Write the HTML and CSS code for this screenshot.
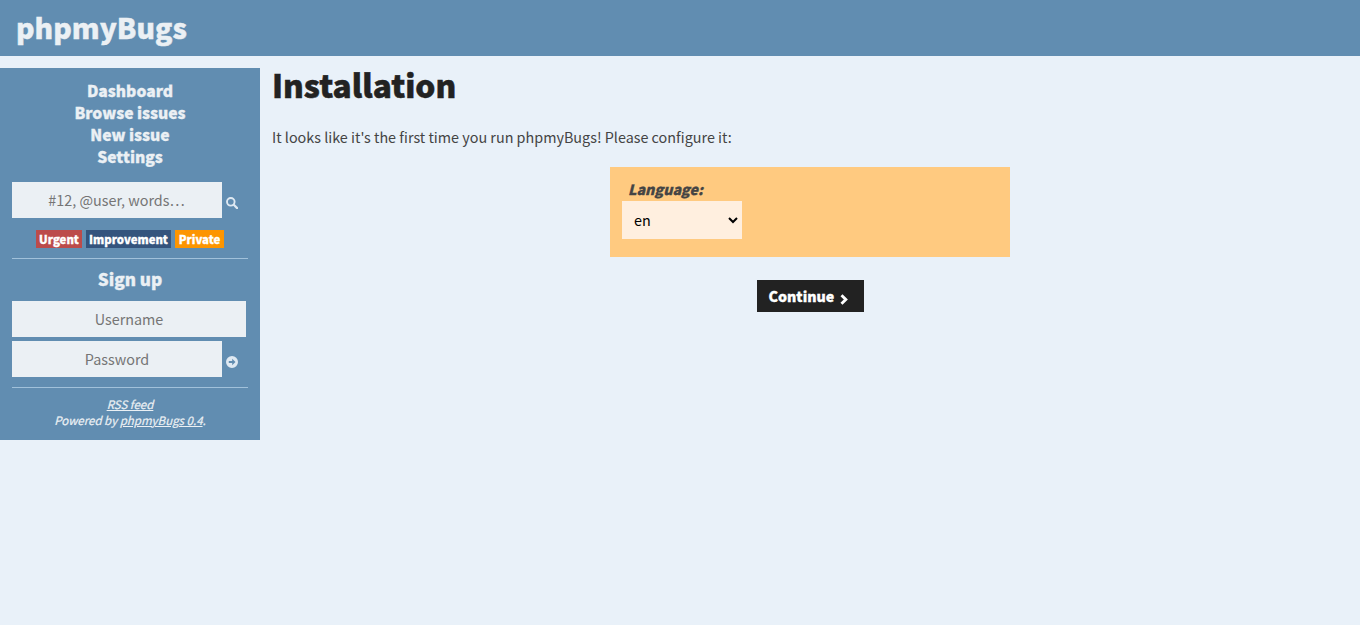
FILE: index.html
```html
<!DOCTYPE html>
<html lang="en">
<head>
<meta charset="utf-8">
<title>phpmyBugs</title>
<link rel="stylesheet" href="styles.css">
</head>
<body>
<header class="top"><span class="brand">phpmyBugs</span></header>
<div class="layout">
  <aside class="sidebar">
    <nav class="menu"><a>Dashboard</a><a>Browse issues</a><a>New issue</a><a>Settings</a></nav>
    <div class="row search">
      <input class="field" type="text" placeholder="#12, @user, words…">
      <svg class="icon" viewBox="0 0 12 12"><circle cx="4.8" cy="4.8" r="3.8" fill="none" stroke="currentColor" stroke-width="1.9"/><path d="M7.8 7.8L11.1 11.1" stroke="currentColor" stroke-width="2.2" stroke-linecap="round"/></svg>
    </div>
    <div class="labels"><a class="label urgent">Urgent</a><a class="label improvement">Improvement</a><a class="label private">Private</a></div>
    <hr class="rule">
    <a class="signup">Sign up</a>
    <input class="field wide" type="text" placeholder="Username">
    <div class="row">
      <input class="field password" type="password" placeholder="Password">
      <svg class="icon" viewBox="0 0 12 12"><path fill="currentColor" fill-rule="evenodd" d="M6 0a6 6 0 1 0 0 12A6 6 0 0 0 6 0zM6.2 2.8L9.5 6 6.2 9.2V7H2.8V5h3.4z"/></svg>
    </div>
    <hr class="rule">
    <footer class="foot"><a class="link">RSS feed</a><br>Powered by <a class="link">phpmyBugs 0.4</a>.</footer>
  </aside>
  <main class="content">
    <h1 class="title">Installation</h1>
    <p class="intro"><span>It looks like it's the first time you run phpmyBugs! Please configure it:</span></p>
    <form class="form">
      <div class="panel">
        <label class="caption">Language:</label>
        <select class="select"><option>en</option></select>
      </div>
      <button class="button" type="button"><span>Continue</span><svg class="chevron" viewBox="0 0 8 11"><path d="M1.5 1.3L5.8 5.5 1.5 9.7" fill="none" stroke="currentColor" stroke-width="2.9"/></svg></button>
    </form>
  </main>
</div>
</body>
</html>
```
FILE: styles.css
```css
* { box-sizing: border-box; }
body {
  margin: 0;
  background: #e9f1f9;
  color: #444;
  font: 14.37px/20px "Noto Sans CJK SC", "Noto Sans", sans-serif;
}
.top { height: 56px; padding: 0 16px; background: #618db1; color: #ebf0f4; }
.brand { font-size: 28.3px; font-weight: 900; line-height: 53px; -webkit-text-stroke: 0.4px currentColor; }
.layout { display: flex; align-items: flex-start; margin-top: 12px; }
.sidebar {
  width: 260px;
  height: 372px;
  padding: 12px;
  background: #618db1;
  color: #ebf0f4;
  text-align: center;
}
.menu { display: flex; flex-direction: column; font-size: 15.65px; font-weight: 900; -webkit-text-stroke: 0.3px currentColor; }
.menu a { height: 22px; line-height: 21px; }
.row { display: flex; gap: 4px; }
.search { margin-top: 14px; }
.field {
  display: block;
  width: 210px;
  height: 36px;
  padding: 0 13px 2px 12px;
  border: 0;
  border-radius: 0;
  background: #ebf0f4;
  font: inherit;
  text-align: center;
}
.field::placeholder { color: #757575; opacity: 1; }
.wide { width: 234px; margin-bottom: 4px; padding-right: 12px; }
.password { padding-right: 12px; }
.icon { width: 12px; height: 12px; margin-top: 15px; color: #dfe9f2; }
.labels { display: flex; justify-content: center; gap: 4px; margin-top: 12px; }
.label { height: 18px; color: #fff; font-size: 11.35px; font-weight: 900; line-height: 18px; -webkit-text-stroke: 0.3px currentColor; }
.urgent { width: 46px; background: #bc4b4b; }
.improvement { width: 85px; background: #34547d; }
.private { width: 49px; background: #fd9500; }
.rule { height: 1px; margin: 10px 0; border: 0; background: #a1c1da; }
.signup { display: block; height: 22px; margin-bottom: 10px; font-size: 17.1px; font-weight: 900; line-height: 20px; -webkit-text-stroke: 0.3px currentColor; }
.foot { margin-top: -2px; font-size: 11.5px; font-style: italic; line-height: 16px; -webkit-text-stroke: 0.2px currentColor; }
.link { text-decoration: underline; }
.content { flex: 1; padding: 0 12px; }
.title { height: 34px; margin: 0; color: #222; font-size: 31.6px; font-weight: 900; line-height: 32px; -webkit-text-stroke: 0.5px currentColor; }
.intro { margin: 25px 0 20px; line-height: 20px; }
.form { display: flex; flex-direction: column; align-items: center; }
.panel { width: 400px; height: 90px; padding: 11px 12px 12px; background: #ffca80; }
.caption { display: block; height: 23px; padding-left: 6px; font-size: 14.2px; font-style: italic; font-weight: 900; line-height: 22px; -webkit-text-stroke: 0.3px currentColor; }
.select { display: block; width: 120px; height: 38px; padding: 0 8px 2px 7px; border: 1px solid #ffefdf; border-radius: 0; background: #ffefdf; color: #000; font: inherit; }
.button {
  display: flex;
  align-items: center;
  gap: 6px;
  width: 107px;
  height: 32px;
  margin-top: 23px;
  padding: 0 12px;
  border: 0;
  background: #222;
  color: #fff;
  font: 900 14.2px/32px "Noto Sans CJK SC", sans-serif;
  -webkit-text-stroke: 0.3px currentColor;
}
.chevron { width: 8px; height: 11px; margin-top: 6px; }
```
